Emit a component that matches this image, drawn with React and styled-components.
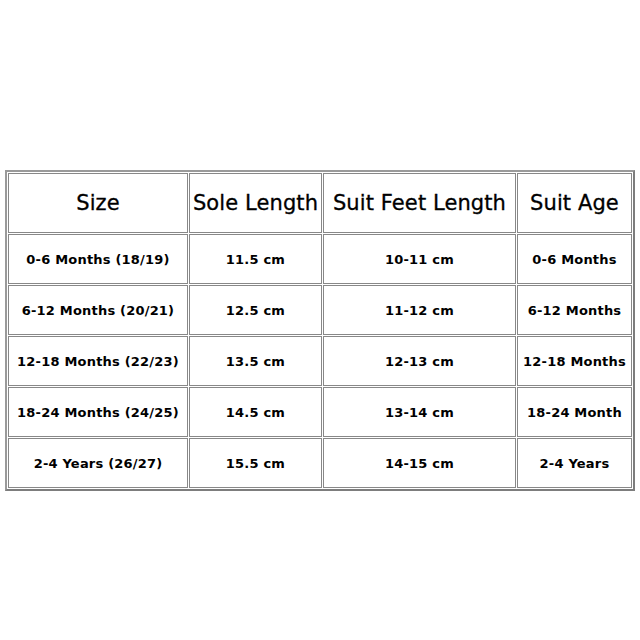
import React from "react";
import styled, { createGlobalStyle } from "styled-components";

const GlobalStyle = createGlobalStyle`
  html, body {
    margin: 0;
    padding: 0;
    background: #ffffff;
  }
  body {
    font-family: "Comic Sans MS", "DejaVu Sans", "Liberation Sans", sans-serif;
    color: #000000;
  }
`;

const Page = styled.div`
  width: 640px;
  height: 640px;
  padding: 170px 0 0 5px;
  box-sizing: border-box;
`;

const Table = styled.table`
  width: 628px;
  table-layout: fixed;
  border-collapse: separate;
  border-spacing: 1px;
  border: 2px solid #9a9a9a;
  border-right-color: #7d7d7d;
  border-bottom-color: #7d7d7d;
`;

const Cell = styled.td`
  border: 1px solid #888888;
  text-align: center;
  vertical-align: middle;
  padding: 0;
  height: ${(p) => (p.$head ? 58 : 48)}px;
  font-size: ${(p) => (p.$head ? "21px" : "13px")};
  font-weight: ${(p) => (p.$head ? 400 : 700)};
  letter-spacing: ${(p) => (p.$head ? "0.1px" : "0.2px")};
  white-space: nowrap;
  -webkit-text-stroke: ${(p) => (p.$head ? "0.3px #000" : "0")};
`;

const widths = [180, 133, 193, 115];

const head = ["Size", "Sole Length", "Suit Feet Length", "Suit Age"];

const rows = [
  ["0-6 Months (18/19)", "11.5 cm", "10-11 cm", "0-6 Months"],
  ["6-12 Months (20/21)", "12.5 cm", "11-12 cm", "6-12 Months"],
  ["12-18 Months (22/23)", "13.5 cm", "12-13 cm", "12-18 Months"],
  ["18-24 Months (24/25)", "14.5 cm", "13-14 cm", "18-24 Month"],
  ["2-4 Years (26/27)", "15.5 cm", "14-15 cm", "2-4 Years"],
];

export default function App() {
  return (
    <Page>
      <GlobalStyle />
      <Table>
        <colgroup>
          {widths.map((w, i) => (
            <col key={i} style={{ width: w }} />
          ))}
        </colgroup>
        <tbody>
          <tr>
            {head.map((h) => (
              <Cell as="th" $head key={h}>
                {h}
              </Cell>
            ))}
          </tr>
          {rows.map((r) => (
            <tr key={r[0]}>
              {r.map((c, i) => (
                <Cell key={i}>{c}</Cell>
              ))}
            </tr>
          ))}
        </tbody>
      </Table>
    </Page>
  );
}
